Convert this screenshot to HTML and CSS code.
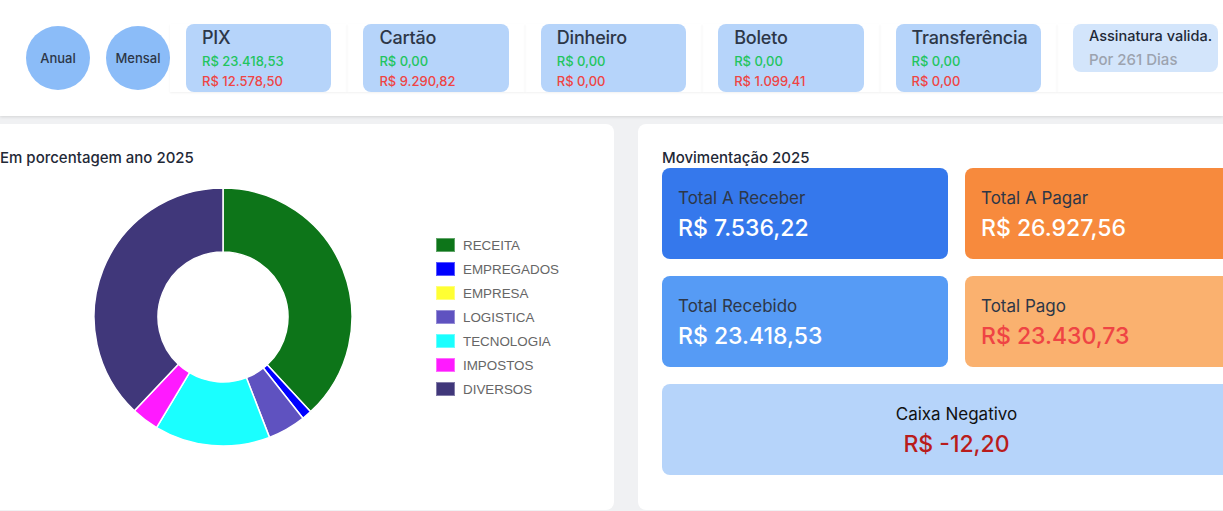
FILE: index.html
```html
<!DOCTYPE html>
<html lang="pt-BR">
<head>
<meta charset="utf-8">
<title>Dashboard</title>
<link rel="stylesheet" href="styles.css">
</head>
<body>
<header class="topbar">
  <div class="circles">
    <div class="circle">Anual</div>
    <div class="circle">Mensal</div>
  </div>
  <div class="wrap"><div class="card"><div class="card-title">PIX</div><div class="pos">R$ 23.418,53</div><div class="neg">R$ 12.578,50</div></div></div>
  <div class="wrap"><div class="card"><div class="card-title">Cartão</div><div class="pos">R$ 0,00</div><div class="neg">R$ 9.290,82</div></div></div>
  <div class="wrap"><div class="card"><div class="card-title">Dinheiro</div><div class="pos">R$ 0,00</div><div class="neg">R$ 0,00</div></div></div>
  <div class="wrap"><div class="card"><div class="card-title">Boleto</div><div class="pos">R$ 0,00</div><div class="neg">R$ 1.099,41</div></div></div>
  <div class="wrap"><div class="card"><div class="card-title">Transferência</div><div class="pos">R$ 0,00</div><div class="neg">R$ 0,00</div></div></div>
  <div class="wrap"><div class="card sub"><div class="sub-title">Assinatura valida.</div><div class="sub-days">Por 261 Dias</div></div></div>
</header>
<main class="main">
  <section class="panel">
    <div class="panel-title">Em porcentagem ano 2025</div>
    <div class="chart">
      <svg class="donut" width="258" height="258" viewBox="0 0 258 258">
        <g stroke="#ffffff" stroke-width="1.5" stroke-linejoin="round">
          <path fill="#0d7519" d="M129,0 A129,129 0 0 1 216.64,223.65 L173.16,176.69 A65,65 0 0 0 129,64 Z"/>
          <path fill="#0000ff" d="M216.64,223.65 A129,129 0 0 1 208.95,230.24 L169.29,180.01 A65,65 0 0 0 173.16,176.69 Z"/>
          <path fill="#5f52c0" d="M208.95,230.24 A129,129 0 0 1 175.44,249.36 L152.40,189.65 A65,65 0 0 0 169.29,180.01 Z"/>
          <path fill="#1affff" d="M175.44,249.36 A129,129 0 0 1 62.56,239.58 L95.52,184.72 A65,65 0 0 0 152.40,189.65 Z"/>
          <path fill="#ff1aff" d="M62.56,239.58 A129,129 0 0 1 40.36,222.73 L84.34,176.23 A65,65 0 0 0 95.52,184.72 Z"/>
          <path fill="#40377a" d="M40.36,222.73 A129,129 0 0 1 129,0 L129,64 A65,65 0 0 0 84.34,176.23 Z"/>
        </g>
      </svg>
      <ul class="legend">
        <li><span class="box c-receita"></span>RECEITA</li>
        <li><span class="box c-empregados"></span>EMPREGADOS</li>
        <li><span class="box c-empresa"></span>EMPRESA</li>
        <li><span class="box c-logistica"></span>LOGISTICA</li>
        <li><span class="box c-tecnologia"></span>TECNOLOGIA</li>
        <li><span class="box c-impostos"></span>IMPOSTOS</li>
        <li><span class="box c-diversos"></span>DIVERSOS</li>
      </ul>
    </div>
  </section>
  <section class="panel panel-right">
    <div class="panel-title">Movimentação 2025</div>
    <div class="stats">
      <div class="stat s-receber"><div class="stat-label">Total A Receber</div><div class="stat-value">R$ 7.536,22</div></div>
      <div class="stat s-pagar"><div class="stat-label">Total A Pagar</div><div class="stat-value">R$ 26.927,56</div></div>
      <div class="stat s-recebido"><div class="stat-label">Total Recebido</div><div class="stat-value">R$ 23.418,53</div></div>
      <div class="stat s-pago"><div class="stat-label">Total Pago</div><div class="stat-value red">R$ 23.430,73</div></div>
      <div class="stat s-caixa"><div class="stat-label">Caixa Negativo</div><div class="stat-value dark-red">R$ -12,20</div></div>
    </div>
  </section>
</main>
</body>
</html>
```

FILE: styles.css
```css
* { box-sizing: border-box; }
html, body { margin: 0; padding: 0; }
body {
  width: 1223px;
  height: 511px;
  overflow: hidden;
  background: #f0f1f3;
  font-family: Inter, "Noto Sans", sans-serif;
  color: #1f2937;
}
.topbar {
  height: 116px;
  background: #ffffff;
  display: flex;
  align-items: flex-start;
  padding: 24px 0 0 26px;
  box-shadow: 0 1px 3px rgba(0,0,0,0.12);
  position: relative;
  z-index: 1;
}
.circles { display: flex; gap: 16px; margin-top: 2px; }
.circle {
  width: 64px; height: 64px; border-radius: 50%;
  background: #8bbcf8;
  display: flex; align-items: center; justify-content: center;
  font-size: 13px; font-weight: 500; color: #2d3748;
}
.wrap {
  flex: 0 0 auto;
  width: 177.4px;
  height: 68px;
  padding: 0 16px;
  box-shadow: 0 1px 2px rgba(0,0,0,0.06);
}
.card {
  width: 145.4px; height: 68px;
  background: #b6d4fa;
  border-radius: 8px;
  padding: 3px 16px 0;
}
.card-title { font-size: 18px; line-height: 22px; font-weight: 500; color: #2d3748; letter-spacing: -0.2px; }
.pos, .neg { font-size: 13px; line-height: 20px; font-weight: 500; }
.pos { color: #22c55e; margin-top: 2px; }
.neg { color: #ef4444; }
.card.sub { height: 48px; background: #d3e5fb; padding-top: 2px; }
.sub-title { font-size: 14.5px; line-height: 20px; font-weight: 500; color: #1f2937; white-space: nowrap; }
.sub-days { font-size: 15px; line-height: 24px; font-weight: 500; color: #9ca3af; margin-top: 2px; }

.main {
  display: flex;
  gap: 24px;
  margin-left: -24px;
  padding-top: 8px;
}
.panel {
  flex: 0 0 638px;
  height: 386px;
  background: #ffffff;
  border-radius: 8px;
  padding: 24px;
}
.panel-title { font-size: 15px; line-height: 20px; font-weight: 500; color: #1f2937; }
.chart { display: flex; align-items: flex-start; margin-top: 20px; padding-left: 94px; }
.donut { display: block; overflow: visible; }
.legend {
  list-style: none; margin: 45px 0 0 84px; padding: 0;
  font-family: "Liberation Sans", Arial, sans-serif;
  font-size: 13.4px; color: #666666;
}
.legend li { height: 24px; display: flex; align-items: center; }
.box { width: 19px; height: 14px; margin-right: 8px; border: 1px solid rgba(255,255,255,0.35); }
.c-receita { background: #0d7519; }
.c-empregados { background: #0000ff; }
.c-empresa { background: #ffff33; }
.c-logistica { background: #5f52c0; }
.c-tecnologia { background: #1affff; }
.c-impostos { background: #ff1aff; }
.c-diversos { background: #40377a; }

.stats {
  display: grid;
  grid-template-columns: 286px 286px;
  grid-auto-rows: 91px;
  gap: 17px;
}
.stat { border-radius: 8px; padding: 18px 16px 0; }
.stat-label { font-size: 17px; line-height: 24px; color: #2d3748; }
.stat-value { font-size: 23px; line-height: 36px; font-weight: 500; color: #ffffff; }
.s-receber { background: #3578ec; }
.s-pagar { background: #f78a3d; }
.s-recebido { background: #569bf5; }
.s-pago { background: #fab16f; }
.s-caixa { background: #b6d4fa; grid-column: 1 / 3; text-align: center; }
.s-caixa .stat-label { color: #111111; }
.red { color: #ef4444; }
.dark-red { color: #b91c1c; }
```
